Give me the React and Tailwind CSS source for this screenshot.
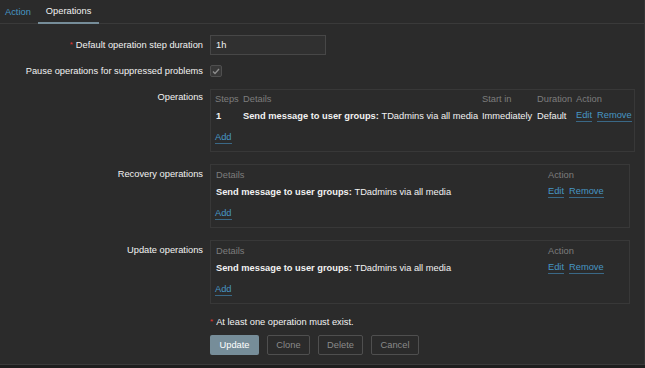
import React from 'react';

const font = { fontFamily: '"Liberation Sans", Arial, sans-serif' };

function Link({ children }) {
  return <span className="text-[#4796c4] border-b border-[#3a6886] leading-[11px]">{children}</span>;
}

function OpBox({ width, pt, withSteps }) {
  return (
    <div className={`${width} ${pt} border border-[#383838] pl-[4px] pb-[7px]`}>
      <div className="flex h-[16px] items-center text-[#7d7d7d]">
        {withSteps && <span className="w-[28px]">Steps</span>}
        <span className={withSteps ? 'w-[239px]' : 'w-[333px] pl-[1px]'}>Details</span>
        {withSteps && <span className="w-[55px]">Start in</span>}
        {withSteps && <span className="w-[39px]">Duration</span>}
        <span>Action</span>
      </div>
      <div className="flex h-[18px] items-center text-[#f2f2f2] font-bold">
        {withSteps && <span className="w-[28px] pl-[1px]">1</span>}
        <span className={withSteps ? 'w-[239px]' : 'w-[333px] pl-[1px]'}>
          Send message to user groups: <span className="font-normal">TDadmins via all media</span>
        </span>
        {withSteps && <span className="w-[55px] font-normal">Immediately</span>}
        {withSteps && <span className="w-[39px] font-normal">Default</span>}
        <span className="font-normal flex gap-[5px]">
          <Link>Edit</Link>
          <Link>Remove</Link>
        </span>
      </div>
      <div className="mt-[7px] h-[12px] flex items-center">
        <Link>Add</Link>
      </div>
    </div>
  );
}

export default function App() {
  return (
    <div
      className="w-[645px] h-[368px] bg-[#2b2b2b] text-[9.3px] leading-[12px] text-[#f2f2f2] flex flex-col overflow-hidden"
      style={font}
    >
      <div className="flex-1 border-r border-[#353535]">
        {/* tabs */}
        <div className="flex h-[24px] border-b border-[#3a3a3a]">
          <div className="pl-[5px] pr-[7px] flex items-center text-[#4796c4]">Action</div>
          <div className="px-[8px] flex items-center text-[#f2f2f2] border-b-[2px] border-[#768d99] -mb-px">
            Operations
          </div>
        </div>

        <div className="grid grid-cols-[203px_1fr] gap-x-[7px]">
          {/* step duration */}
          <div className="mt-[11px] h-[20px] flex items-center justify-end">
            <span className="text-[#e33734] mr-[3px] text-[8px]">*</span>Default operation step duration
          </div>
          <div className="mt-[11px]">
            <div className="w-[116px] h-[20px] bg-[#303030] border border-[#474747] flex items-center px-[5px]">1h</div>
          </div>

          {/* pause */}
          <div className="mt-[10px] h-[12px] flex items-center justify-end">Pause operations for suppressed problems</div>
          <div className="mt-[10px]">
            <div className="w-[12px] h-[12px] bg-[#383838] border border-[#4f4f4f] rounded-[2px] flex items-center justify-center">
              <svg width="8" height="7" viewBox="0 0 8 7">
                <path d="M1 3.5 L3 5.5 L7 1" stroke="#8f8f8f" strokeWidth="1.3" fill="none" />
              </svg>
            </div>
          </div>

          {/* operations */}
          <div className="mt-[12px] pt-[2px] text-right">Operations</div>
          <div className="mt-[12px]">
            <OpBox width="w-[425px]" pt="pt-[1px]" withSteps />
          </div>

          {/* recovery */}
          <div className="mt-[12px] pt-[4px] text-right">Recovery operations</div>
          <div className="mt-[12px]">
            <OpBox width="w-[420px]" pt="pt-[2px]" />
          </div>

          {/* update */}
          <div className="mt-[12px] pt-[4px] text-right">Update operations</div>
          <div className="mt-[12px]">
            <OpBox width="w-[420px]" pt="pt-[2px]" />
          </div>

          <div />
          <div className="mt-[12px] flex items-center">
            <span className="text-[#e33734] mr-[3px] text-[8px]">*</span>At least one operation must exist.
          </div>

          <div />
          <div className="mt-[7px] flex gap-[8px]">
            <button className="w-[49px] h-[20px] bg-[#768d99] text-white rounded-[2px]">Update</button>
            <button className="w-[43px] h-[20px] border border-[#4f4f4f] text-[#8a8a8a] rounded-[2px]">Clone</button>
            <button className="w-[45px] h-[20px] border border-[#4f4f4f] text-[#8a8a8a] rounded-[2px]">Delete</button>
            <button className="w-[48px] h-[20px] border border-[#4f4f4f] text-[#8a8a8a] rounded-[2px]">Cancel</button>
          </div>
        </div>
      </div>
      <div className="h-[4px] border-t border-[#3a3a3a] bg-[#1e1e1e]" />
    </div>
  );
}
